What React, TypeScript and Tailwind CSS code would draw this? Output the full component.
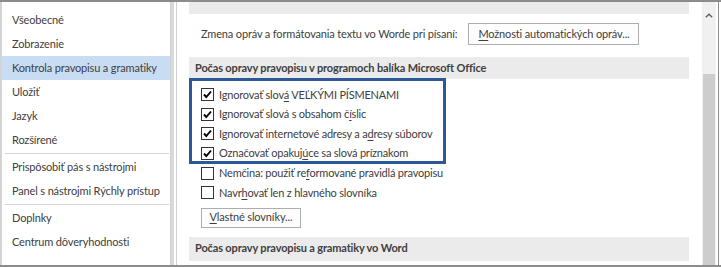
import React from "react";

const font = { fontFamily: "Lato, 'Noto Sans', sans-serif", letterSpacing: "-0.15px" };

function NavItem({ label, active }: { label: string; active?: boolean }) {
  return (
    <div
      className={`h-[24px] flex items-center pl-[10px] text-[11px] text-[#404040] ${
        active ? "bg-[#c8dcf4]" : ""
      }`}
    >
      {label}
    </div>
  );
}

function Sep() {
  return <div className="h-px bg-[#d6d6d6] mt-[1px] mb-[1px] ml-[3px] mr-[1px]" />;
}

function Check({ checked }: { checked?: boolean }) {
  return (
    <span className="w-[13px] h-[13px] border border-[#333333] bg-white flex items-center justify-center shrink-0">
      {checked && (
        <svg width="11" height="11" viewBox="0 0 11 11">
          <path d="M2 5.5 L4.3 8 L9 2.5" fill="none" stroke="#000" strokeWidth="1.9" />
        </svg>
      )}
    </span>
  );
}

function Row({ checked, children }: { checked?: boolean; children: React.ReactNode }) {
  return (
    <div className="h-[19.6px] flex items-center gap-[5px] pl-[12px] text-[11px] text-[#404040] tracking-[-0.2px]">
      <Check checked={checked} />
      <span>{children}</span>
    </div>
  );
}

function Header({ children, className = "" }: { children: React.ReactNode; className?: string }) {
  return (
    <div className={`bg-[#ebebeb] flex pl-[6px] text-[11px] font-bold text-[#404040] ${className}`}>
      {children}
    </div>
  );
}

export default function App() {
  return (
    <div
      className="w-[721px] h-[267px] flex bg-white border-y-2 border-[#8c8c8c] overflow-hidden"
      style={font}
    >
      <nav className="w-[171px] shrink-0 border-l-2 border-l-[#d4d4d4] border-r border-r-[#d0d0d0] pt-[6px]">
        <NavItem label="Všeobecné" />
        <NavItem label="Zobrazenie" />
        <NavItem label="Kontrola pravopisu a gramatiky" active />
        <NavItem label="Uložiť" />
        <NavItem label="Jazyk" />
        <NavItem label="Rozšírené" />
        <Sep />
        <NavItem label="Prispôsobiť pás s nástrojmi" />
        <NavItem label="Panel s nástrojmi Rýchly prístup" />
        <Sep />
        <NavItem label="Doplnky" />
        <NavItem label="Centrum dôveryhodnosti" />
      </nav>
      <div className="w-[5px] shrink-0 flex">
        <div className="w-[3px] bg-[#dadada]" />
      </div>
      <main className="flex-1 flex border-l border-l-[#d0d0d0] border-r border-r-[#8c8c8c] mr-[2px]">
        <div className="flex-1 overflow-hidden pl-[12px] pr-[13px]">
          <Header className="h-[26px] -mt-[14px] items-end pb-[10px]">Možnosti automatických opráv</Header>
          <div className="mt-[9px] flex items-center gap-[11px] pl-[12px] text-[11px] text-[#404040]">
            <span>Zmena opráv a formátovania textu vo Worde pri písaní:</span>
            <button className="w-[171px] h-[22px] border border-[#adadad] bg-[#fdfdfd] text-left pl-[9px] text-[11px] text-[#404040]">
              <u className="underline-offset-2">M</u>ožnosti automatických opráv...
            </button>
          </div>
          <Header className="h-[22px] mt-[12px] items-center">
            Počas opravy pravopisu v programoch balíka Microsoft Office
          </Header>
          <div className="relative pt-[6px]">
            <div className="absolute left-0 top-[-1px] w-[257px] h-[86px] border-[3px] border-[#2c5898] pointer-events-none" />
            <Row checked>
              Ignorovať slov<u className="underline-offset-2">á</u> VEĽKÝMI PÍSMENAMI
            </Row>
            <Row checked>
              Ignorovať slová s obsahom č<u className="underline-offset-2">í</u>slic
            </Row>
            <Row checked>
              Ignorovať internetové adresy a a<u className="underline-offset-2">d</u>resy súborov
            </Row>
            <Row checked>
              Označovať opakuj<u className="underline-offset-2">ú</u>ce sa slová príznakom
            </Row>
            <Row>
              Nemčina: použiť re<u className="underline-offset-2">f</u>ormované pravidlá pravopisu
            </Row>
            <Row>
              Navr<u className="underline-offset-2">h</u>ovať len z hlavného slovníka
            </Row>
            <div className="pl-[12px] mt-[5px] flex">
              <button className="w-[100px] h-[20px] border border-[#adadad] bg-[#fdfdfd] text-[11px] text-[#404040]">
                <u className="underline-offset-2">V</u>lastné slovníky...
              </button>
            </div>
          </div>
          <Header className="h-[24px] mt-[9px] items-center">Počas opravy pravopisu a gramatiky vo Word</Header>
        </div>
        <div className="w-[14px] shrink-0 bg-[#f0f0f0] flex flex-col">
          <div className="h-[72px] flex justify-center pt-[11px]">
            <svg width="8" height="5" viewBox="0 0 8 5">
              <path d="M0.8 4.2 L4 1.2 L7.2 4.2" fill="none" stroke="#606060" strokeWidth="1.4" />
            </svg>
          </div>
          <div className="flex-1 bg-[#cdcdcd] mx-[1px]" />
        </div>
        <div className="w-[2px] shrink-0" />
      </main>
    </div>
  );
}
